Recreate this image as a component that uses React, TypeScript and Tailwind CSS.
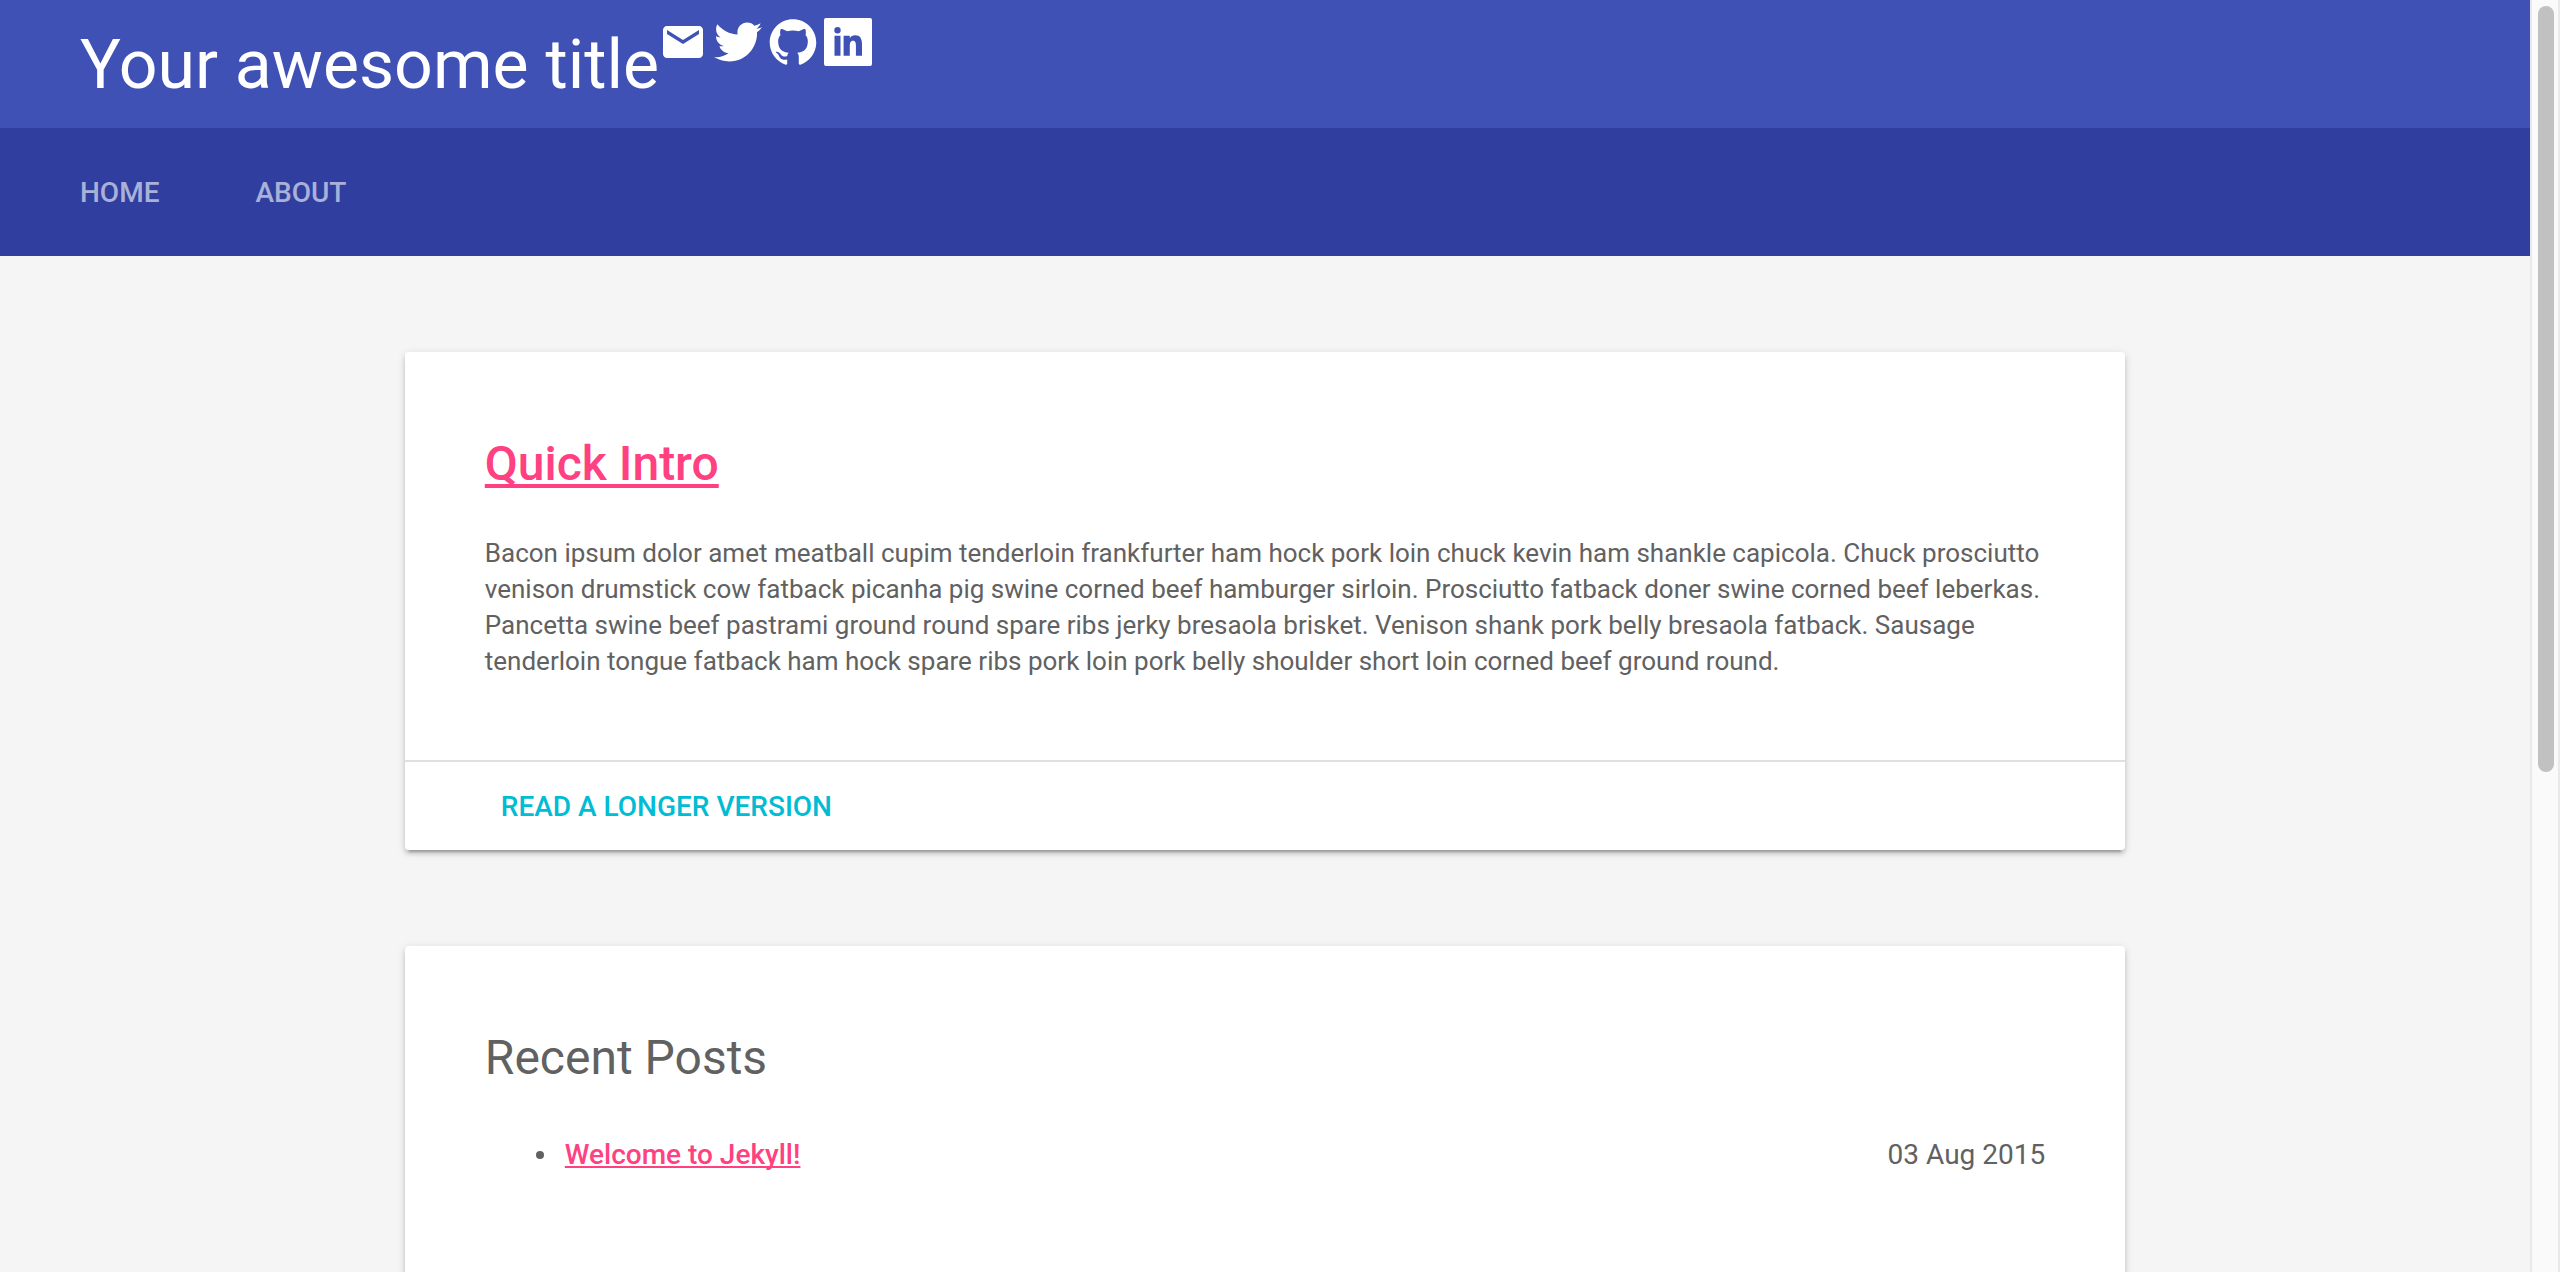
import React from "react";

const icons = [
  {
    label: "Email",
    box: "0 0 24 24",
    path: "M20 4H4c-1.100 0-1.990.9-1.990 2L2 18c0 1.100.9 2 2 2h16c1.100 0 2-.9 2-2V6c0-1.100-.9-2-2-2zm0 4l-8 5-8-5V6l8 5 8-5v2z",
  },
  {
    label: "Twitter",
    box: "0 0 16 16",
    path: "M15.969,3.058c-0.586,0.26-1.217,0.436-1.878,0.515c0.675-0.405,1.194-1.045,1.438-1.809c-0.632,0.375-1.332,0.647-2.076,0.793c-0.596-0.636-1.446-1.033-2.387-1.033c-1.806,0-3.27,1.464-3.27,3.27c0,0.256,0.029,0.506,0.085,0.745C5.163,5.404,2.753,4.102,1.14,2.124C0.859,2.607,0.698,3.168,0.698,3.767c0,1.134,0.577,2.135,1.455,2.722C1.616,6.472,1.112,6.325,0.671,6.08c0,0.014,0,0.027,0,0.041c0,1.584,1.127,2.906,2.623,3.206C3.02,9.402,2.731,9.442,2.433,9.442c-0.211,0-0.416-0.021-0.615-0.059c0.416,1.299,1.624,2.245,3.055,2.271c-1.119,0.877-2.529,1.4-4.061,1.4c-0.264,0-0.524-0.015-0.78-0.046c1.447,0.928,3.166,1.469,5.013,1.469c6.015,0,9.304-4.983,9.304-9.304c0-0.142-0.003-0.283-0.009-0.423C14.976,4.29,15.531,3.714,15.969,3.058z",
  },
  {
    label: "GitHub",
    box: "0 0 16 16",
    path: "M7.999,0.431c-4.285,0-7.76,3.474-7.76,7.761c0,3.428,2.223,6.337,5.307,7.363c0.388,0.071,0.53-0.168,0.53-0.374c0-0.184-0.007-0.672-0.01-1.32c-2.159,0.469-2.614-1.04-2.614-1.04c-0.353-0.896-0.862-1.135-0.862-1.135c-0.705-0.481,0.053-0.472,0.053-0.472c0.779,0.055,1.189,0.8,1.189,0.8c0.692,1.186,1.816,0.843,2.258,0.645c0.071-0.502,0.271-0.843,0.493-1.037C4.86,11.425,3.049,10.76,3.049,7.786c0-0.847,0.302-1.54,0.799-2.082C3.768,5.507,3.501,4.718,3.924,3.65c0,0,0.652-0.209,2.134,0.796C6.677,4.273,7.34,4.187,8,4.184c0.659,0.003,1.323,0.089,1.943,0.261c1.482-1.004,2.132-0.796,2.132-0.796c0.423,1.068,0.157,1.857,0.077,2.054c0.497,0.542,0.798,1.235,0.798,2.082c0,2.981-1.814,3.637-3.543,3.829c0.279,0.24,0.527,0.713,0.527,1.437c0,1.037-0.01,1.874-0.01,2.129c0,0.208,0.14,0.449,0.534,0.373c3.081-1.028,5.302-3.935,5.302-7.362C15.76,3.906,12.285,0.431,7.999,0.431z",
  },
  {
    label: "LinkedIn",
    box: "0 0 48 48",
    path: "M2 0H46a2 2 0 0 1 2 2V46a2 2 0 0 1-2 2H2a2 2 0 0 1-2-2V2a2 2 0 0 1 2-2zM10.500 17.800V37.800H16.500V17.800zM13.500 9a3.200 3.200 0 1 0 0 6.400a3.200 3.200 0 1 0 0-6.400zM19.600 17.800V37.800H25.800V28C25.800 25 26.500 22.800 29 22.800C31.500 22.800 31.900 25 31.900 28V37.800H38V26.500C38 20.500 36 17.300 31.300 17.300C28.700 17.300 26.700 18.600 25.800 20.300V17.800z",
  },
];

const CARD =
  "flex flex-col rounded-[4px] bg-white shadow-[0_4px_4px_rgba(0,0,0,0.14),0_6px_2px_-4px_rgba(0,0,0,0.2),0_2px_10px_rgba(0,0,0,0.12)]";

export default function App() {
  return (
    <div className="flex h-screen overflow-hidden bg-[#f5f5f5] font-['Roboto',sans-serif] text-[#616161]">
      <div className="flex min-w-0 flex-1 flex-col overflow-hidden">
        <header className="shrink-0">
          <div className="flex h-32 items-start bg-[#3f51b5] px-20 text-white">
            <h1 className="text-[68px] leading-[130px]">Your awesome title</h1>
            <div className="flex gap-[7px] pt-[18px]">
              {icons.map((icon) => (
                <a key={icon.label} href="#" aria-label={icon.label}>
                  <svg viewBox={icon.box} className="size-12 fill-current" fillRule="evenodd">
                    <path d={icon.path} />
                  </svg>
                </a>
              ))}
            </div>
          </div>
          <nav className="flex h-32 items-center gap-24 bg-[#303f9f] px-20 pt-0.5 text-[28px] font-medium text-white/60">
            <a href="#">HOME</a>
            <a href="#">ABOUT</a>
          </nav>
        </header>
        <main className="mx-auto flex w-[68%] flex-col gap-24 pt-24">
          <section className={CARD}>
            <div className="p-20">
              <h2 className="text-[48px] leading-16 font-medium text-[#ff4081]">
                <a href="#" className="underline decoration-4 underline-offset-4 [text-decoration-skip-ink:none]">
                  Quick Intro
                </a>
              </h2>
              <p className="mt-[39px] mb-px text-[26px] leading-9">
                Bacon ipsum dolor amet meatball cupim tenderloin frankfurter ham hock pork loin chuck kevin ham shankle
                capicola. Chuck prosciutto venison drumstick cow fatback picanha pig swine corned beef hamburger
                sirloin. Prosciutto fatback doner swine corned beef leberkas. Pancetta swine beef pastrami ground round
                spare ribs jerky bresaola brisket. Venison shank pork belly bresaola fatback. Sausage tenderloin tongue
                fatback ham hock spare ribs pork loin pork belly shoulder short loin corned beef ground round.
              </p>
            </div>
            <div className="flex h-[90px] items-center border-t-2 border-[#e0e0e0] px-24 pt-0.5 text-[28px] font-medium text-[#00bcd4]">
              <a href="#">READ A LONGER VERSION</a>
            </div>
          </section>
          <section className={CARD}>
            <div className="p-20 pb-40">
              <h2 className="text-[48px] leading-16">Recent Posts</h2>
              <ul className="mt-[41px] pl-[51px] text-[28px] leading-12">
                <li className="flex items-center gap-[21px] before:size-2 before:rounded-full before:bg-[#616161]">
                  <div className="flex flex-1 justify-between">
                    <a
                      href="#"
                      className="font-medium text-[#ff4081] underline decoration-2 underline-offset-2 [text-decoration-skip-ink:none]"
                    >
                      Welcome to Jekyll!
                    </a>
                    <time dateTime="2015-08-03">03 Aug 2015</time>
                  </div>
                </li>
              </ul>
            </div>
          </section>
        </main>
      </div>
      <div className="w-[30px] shrink-0 border-x-2 border-[#e9e9e9] bg-[#fafafa] pt-1.5 pl-1.5">
        <div className="h-[766px] w-4 rounded-full bg-[#c1c1c1]" />
      </div>
    </div>
  );
}
